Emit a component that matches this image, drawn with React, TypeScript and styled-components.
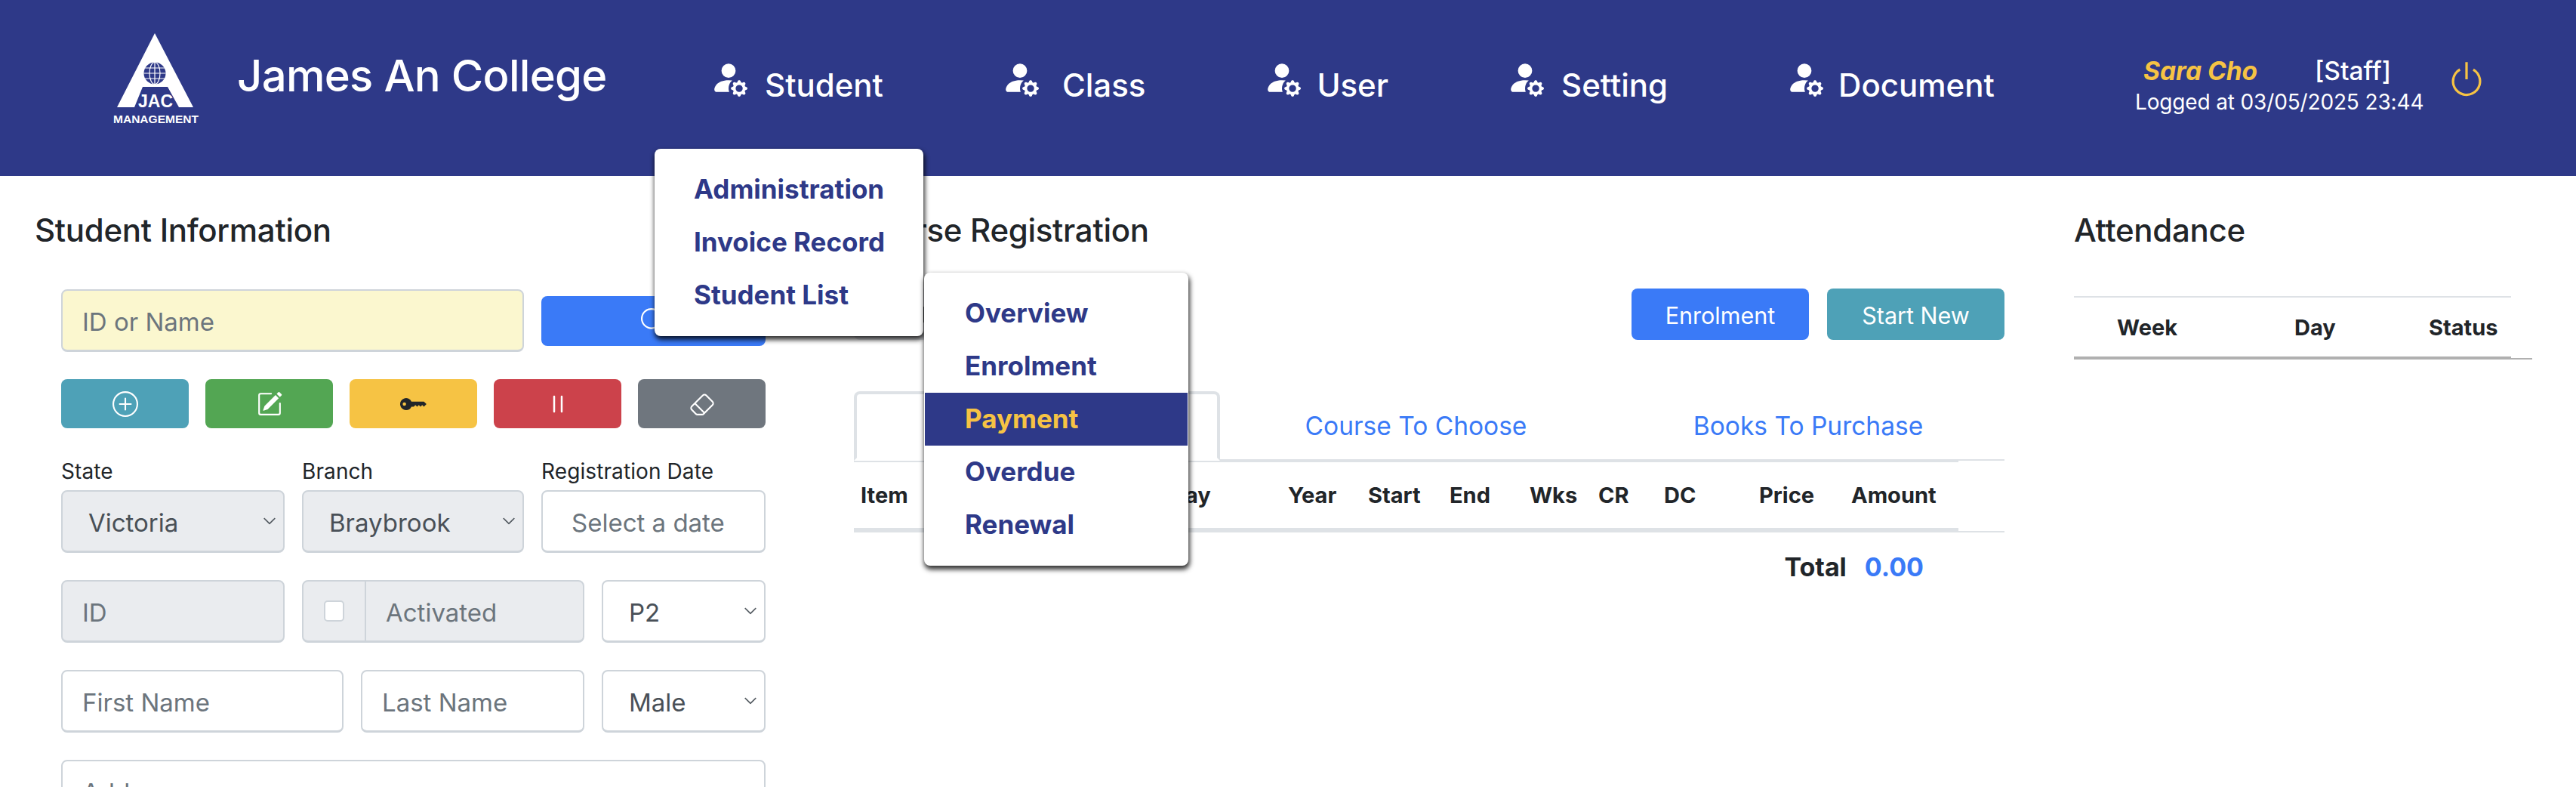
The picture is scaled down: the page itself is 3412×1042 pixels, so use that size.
import React from 'react';
import styled, { createGlobalStyle } from 'styled-components';
import { BsPersonFillGear, BsPower, BsSearch, BsPlusCircle, BsPencilSquare, BsKeyFill, BsPause, BsEraser, BsChevronDown } from 'react-icons/bs';

const NAVY = '#2e3988';
const YELLOW = '#f6c344';
const BLUE = '#3a7af7';
const TEAL = '#4ea1b7';
const LINE = '#dee2e6';
const FONT = 'Inter, "Liberation Sans", sans-serif';

const Global = createGlobalStyle`
  html, body { margin: 0; padding: 0; background: #fff; overflow: hidden; }
  * { box-sizing: border-box; }
  body { font-family: ${FONT}; color: #212529; }
`;

const Page = styled.div`
  position: relative;
  width: 3412px;
  height: 1042px;
  overflow: hidden;
`;

const Header = styled.header`
  height: 233px;
  background: ${NAVY};
  display: flex;
  align-items: flex-start;
  color: #fff;
`;

const Brand = styled.div`
  width: 940px;
  flex: none;
  display: flex;
  align-items: flex-start;
  padding: 44px 0 0 147px;
`;

const LogoSvg = styled.svg`
  width: 120px;
  height: 124px;
  flex: none;
  display: block;
`;

const BrandName = styled.div`
  margin: 20px 0 0 47px;
  font-size: 58px;
  letter-spacing: -0.7px;
  line-height: 72px;
  font-weight: 500;
  white-space: nowrap;
`;

const Nav = styled.nav`
  display: flex;
  gap: 156px;
  padding-top: 83px;
  width: 1888px;
  flex: none;
`;

const NavItem = styled.a<{ $gap: number }>`
  display: flex;
  align-items: flex-start;
  gap: ${p => p.$gap}px;
  font-size: 42px;
  line-height: 53px;
  font-weight: 500;
  color: #fff;
  white-space: nowrap;
  span { padding-top: 3px; }
  svg { width: 50px; height: 50px; flex: none; margin-top: -5px; }
`;

const UserBox = styled.div`
  display: flex;
  flex-direction: column;
  padding-top: 74px;
  width: 413px;
  flex: none;
`;

const UserTop = styled.div`
  display: flex;
  font-size: 33.5px;
  line-height: 40px;
  font-weight: 500;
  padding-left: 11px;
  white-space: nowrap;
`;

const UserName = styled.span`
  color: ${YELLOW};
  font-style: italic;
  font-weight: 700;
  width: 227px;
  flex: none;
`;

const LoggedAt = styled.div`
  font-size: 28px;
  letter-spacing: -0.15px;
  line-height: 42px;
  white-space: nowrap;
`;

const Power = styled(BsPower)`
  width: 52px;
  height: 52px;
  color: ${YELLOW};
  margin-top: 79px;
  flex: none;
`;

const Main = styled.main`
  display: flex;
  align-items: flex-start;
`;

const Heading = styled.h2`
  margin: 0;
  font-size: 42px;
  letter-spacing: -0.3px;
  line-height: 50px;
  font-weight: 500;
  white-space: nowrap;
`;

const LeftCol = styled.section`
  width: 1131px;
  flex: none;
  padding: 47px 0 0 46px;
`;

const Form = styled.div`
  width: 968px;
  padding: 53px 0 0 35px;
  display: flex;
  flex-direction: column;
  gap: 36px;
`;

const Row = styled.div<{ $cols: string }>`
  display: grid;
  grid-template-columns: ${p => p.$cols};
  column-gap: 23px;
  align-items: center;
`;

const fieldCss = `
  height: 83px;
  border: 2px solid #ced4da;
  border-bottom-width: 3px;
  border-radius: 8px;
  font-family: ${FONT};
  font-size: 33px;
  display: flex;
  align-items: center;
  min-width: 0;
  width: 100%;
  outline: none;
`;

const TextField = styled.input<{ $bg?: string; $pad?: number }>`
  ${fieldCss}
  padding: 3px ${p => p.$pad ?? 26}px 0;
  background: ${p => p.$bg || '#fff'};
  color: #495057;
  &::placeholder { color: #6c757d; opacity: 1; }
`;

const SelectBox = styled.div<{ $disabled?: boolean }>`
  ${fieldCss}
  position: relative;
  padding: 3px 34px 0;
  color: #495057;
  background: ${p => (p.$disabled ? '#eaecef' : '#fff')};
  svg {
    position: absolute;
    right: 9px;
    top: 30px;
    width: 18px;
    height: 18px;
    stroke-width: 0.6px;
  }
`;

const LabelledField = styled.div`
  display: flex;
  flex-direction: column;
  gap: 4px;
`;

const FieldLabel = styled.label`
  font-size: 28px;
  letter-spacing: 0.1px;
  line-height: 42px;
  color: #212529;
  white-space: nowrap;
`;

const ActionBar = styled.div`
  display: grid;
  grid-template-columns: repeat(5, 1fr);
  column-gap: 22px;
`;

const ActionButton = styled.button<{ $bg: string; $fg?: string; $icon?: number }>`
  height: 65px;
  border: none;
  border-radius: 8px;
  background: ${p => p.$bg};
  color: ${p => p.$fg || '#fff'};
  display: flex;
  align-items: center;
  justify-content: center;
  padding: 0;
  svg { width: ${p => p.$icon ?? 34}px; height: ${p => p.$icon ?? 34}px; }
`;

const SearchButton = styled(ActionButton)`
  height: 66px;
`;

const CheckGroup = styled.div`
  display: flex;
  height: 83px;
  border: 2px solid #ced4da;
  border-bottom-width: 3px;
  border-radius: 8px;
  background: #eaecef;
  overflow: hidden;
`;

const CheckCell = styled.div`
  width: 83px;
  flex: none;
  display: flex;
  align-items: center;
  justify-content: center;
  border-right: 2px solid #ced4da;
`;

const CheckBox = styled.input.attrs({ type: 'checkbox' })`
  appearance: none;
  width: 27px;
  height: 28px;
  margin: 0;
  background: #fff;
  border: 2px solid #ced4da;
  border-radius: 5px;
`;

const CheckLabel = styled.div`
  font-size: 33px;
  color: #6c757d;
  display: flex;
  align-items: center;
  padding: 3px 0 0 26px;
`;

const MidCol = styled.section`
  width: 1524px;
  flex: none;
  padding-top: 47px;
`;

const TopActions = styled.div`
  display: flex;
  align-items: flex-start;
  height: 188px;
  padding-top: 52px;
`;

const GhostButton = styled.div`
  position: relative;
  width: 170px;
  height: 68px;
  background: #e4e6ea;
  border-radius: 8px;
  &::after {
    content: '';
    position: absolute;
    left: 92px;
    top: 24px;
    width: 3px;
    height: 21px;
    background: #212529;
  }
`;

const ActionSpacer = styled.div`
  flex: 1;
`;

const TextButton = styled.button<{ $bg: string }>`
  width: 235px;
  height: 68px;
  margin-left: 24px;
  border: none;
  border-radius: 8px;
  background: ${p => p.$bg};
  color: #fff;
  font-family: ${FONT};
  font-size: 30.5px;
  padding: 2px 0 0;
`;

const Tabs = styled.div`
  display: flex;
  height: 92px;
  border-bottom: 2px solid ${LINE};
`;

const ActiveTab = styled.div`
  width: 485px;
  height: 92px;
  flex: none;
  background: #fff;
  border: 4px solid ${LINE};
  border-bottom-color: #fff;
  border-radius: 8px 8px 0 0;
`;

const TabLink = styled.a<{ $w: number }>`
  width: ${p => p.$w}px;
  flex: none;
  display: flex;
  align-items: center;
  justify-content: center;
  color: ${BLUE};
  font-size: 33.5px;
  padding-top: 2px;
  white-space: nowrap;
`;

const CourseTable = styled.div`
  border-bottom: 2px solid ${LINE};
`;

const CourseHead = styled.div`
  width: 1463px;
  height: 95px;
  margin-bottom: -2px;
  padding-left: 9px;
  display: grid;
  grid-template-columns: 409px 157px 106px 108px 106px 91px 87px 126px 122px 1fr;
  align-items: center;
  border-top: 2px solid ${LINE};
  border-bottom: 6px solid ${LINE};
  font-size: 29px;
  font-weight: 700;
  white-space: nowrap;
`;

const TotalRow = styled.div`
  width: 1463px;
  display: flex;
  justify-content: flex-end;
  gap: 24px;
  padding: 22px 46px 0 0;
  font-size: 34px;
  line-height: 48px;
  font-weight: 700;
`;

const TotalValue = styled.span`
  color: ${BLUE};
`;

const RightCol = styled.section`
  flex: 1;
  padding: 47px 0 0 92px;
`;

const AttendanceHead = styled.div`
  position: relative;
  width: 579px;
  height: 84px;
  margin-top: 62px;
  border-top: 2px solid ${LINE};
  border-bottom: 4px solid #b0b0b0;
  display: grid;
  grid-template-columns: 235px 178px 1fr;
  padding-left: 57px;
  align-items: center;
  font-size: 29px;
  font-weight: 700;
`;

const HeadOverrun = styled.i`
  position: absolute;
  left: 100%;
  bottom: -4px;
  width: 28px;
  height: 2px;
  background: #b0b0b0;
`;

const Menu = styled.div<{ $l: number; $t: number; $w: number }>`
  position: absolute;
  left: ${p => p.$l}px;
  top: ${p => p.$t}px;
  width: ${p => p.$w}px;
  padding: 19px 1px;
  background: #fff;
  border-radius: 8px;
  box-shadow: 1px 4px 6px 1px rgba(0, 0, 0, 0.8);
  z-index: 2;
`;

const MenuItem = styled.div<{ $pad: number; $active?: boolean }>`
  height: 70px;
  display: flex;
  align-items: center;
  padding: 0 0 2px ${p => p.$pad}px;
  font-size: 35px;
  font-weight: 700;
  white-space: nowrap;
  color: ${p => (p.$active ? YELLOW : NAVY)};
  background: ${p => (p.$active ? NAVY : 'transparent')};
`;

const Logo = () => (
  <LogoSvg viewBox="-3 0 120 124" aria-label="JAC Management logo">
    <path d="M55 0 L106 98 H87 L72 71 H39 L28 98 H5 Z" fill="#fff" />
    <circle cx="55" cy="53" r="14.5" fill={NAVY} />
    <g stroke="#fff" strokeWidth="1.2" fill="none">
      <ellipse cx="55" cy="53" rx="7" ry="14.5" />
      <path d="M55 38.5V67.5M42 46H68M40.5 53H69.5M42 60H68" />
    </g>
    <text x="56" y="98" textAnchor="middle" fill="#fff" fontFamily="'Liberation Sans',sans-serif" fontWeight="700" fontSize="23" textLength="46" lengthAdjust="spacingAndGlyphs">JAC</text>
    <text x="56.5" y="119" textAnchor="middle" fill="#fff" fontFamily="'Liberation Sans',sans-serif" fontWeight="700" fontSize="15" textLength="113" lengthAdjust="spacingAndGlyphs">MANAGEMENT</text>
  </LogoSvg>
);

const navItems: [string, number][] = [['Student', 23], ['Class', 31], ['User', 21], ['Setting', 23], ['Document', 20]];

export default function App() {
  return (
    <Page>
      <Global />
      <Header>
        <Brand>
          <Logo />
          <BrandName>James An College</BrandName>
        </Brand>
        <Nav>
          {navItems.map(([t, g]) => (
            <NavItem key={t} $gap={g}><BsPersonFillGear /><span>{t}</span></NavItem>
          ))}
        </Nav>
        <UserBox>
          <UserTop><UserName>Sara Cho</UserName><span>[Staff]</span></UserTop>
          <LoggedAt>Logged at 03/05/2025 23:44</LoggedAt>
        </UserBox>
        <Power />
      </Header>
      <Main>
        <LeftCol>
          <Heading>Student Information</Heading>
          <Form>
            <Row $cols="613px 297px">
              <TextField placeholder="ID or Name" $bg="#fbf7cf" />
              <SearchButton $bg={BLUE}><BsSearch /></SearchButton>
            </Row>
            <ActionBar>
              <ActionButton $bg={TEAL}><BsPlusCircle /></ActionButton>
              <ActionButton $bg="#53a653"><BsPencilSquare /></ActionButton>
              <ActionButton $bg={YELLOW} $fg="#212529" $icon={36}><BsKeyFill /></ActionButton>
              <ActionButton $bg="#cc424b" $icon={40}><BsPause /></ActionButton>
              <ActionButton $bg="#6f767e"><BsEraser /></ActionButton>
            </ActionBar>
            <Row $cols="296px 294px 297px">
              <LabelledField><FieldLabel>State</FieldLabel><SelectBox $disabled>Victoria<BsChevronDown /></SelectBox></LabelledField>
              <LabelledField><FieldLabel>Branch</FieldLabel><SelectBox $disabled>Braybrook<BsChevronDown /></SelectBox></LabelledField>
              <LabelledField><FieldLabel>Registration Date</FieldLabel><TextField placeholder="Select a date" $pad={38} /></LabelledField>
            </Row>
            <Row $cols="296px 374px 217px">
              <TextField placeholder="ID" $bg="#eaecef" />
              <CheckGroup><CheckCell><CheckBox /></CheckCell><CheckLabel>Activated</CheckLabel></CheckGroup>
              <SelectBox>P2<BsChevronDown /></SelectBox>
            </Row>
            <Row $cols="374px 296px 217px">
              <TextField placeholder="First Name" />
              <TextField placeholder="Last Name" />
              <SelectBox>Male<BsChevronDown /></SelectBox>
            </Row>
            <Row $cols="1fr">
              <TextField placeholder="Address" />
            </Row>
          </Form>
        </LeftCol>
        <MidCol>
          <Heading>Course Registration</Heading>
          <TopActions>
            <GhostButton />
            <ActionSpacer />
            <TextButton $bg={BLUE}>Enrolment</TextButton>
            <TextButton $bg={TEAL}>Start New</TextButton>
          </TopActions>
          <Tabs>
            <ActiveTab />
            <TabLink $w={519}>Course To Choose</TabLink>
            <TabLink $w={520}>Books To Purchase</TabLink>
          </Tabs>
          <CourseTable>
            <CourseHead>
              <span>Item</span><span>Day</span><span>Year</span><span>Start</span><span>End</span>
              <span>Wks</span><span>CR</span><span>DC</span><span>Price</span><span>Amount</span>
            </CourseHead>
          </CourseTable>
          <TotalRow><span>Total</span><TotalValue>0.00</TotalValue></TotalRow>
        </MidCol>
        <RightCol>
          <Heading>Attendance</Heading>
          <AttendanceHead>
            <span>Week</span><span>Day</span><span>Status</span>
            <HeadOverrun />
          </AttendanceHead>
        </RightCol>
      </Main>
      <Menu $l={867} $t={197} $w={356}>
        <MenuItem $pad={51}>Administration</MenuItem>
        <MenuItem $pad={51}>Invoice Record</MenuItem>
        <MenuItem $pad={51}>Student List</MenuItem>
      </Menu>
      <Menu $l={1224} $t={361} $w={350}>
        <MenuItem $pad={53}>Overview</MenuItem>
        <MenuItem $pad={53}>Enrolment</MenuItem>
        <MenuItem $pad={53} $active>Payment</MenuItem>
        <MenuItem $pad={53}>Overdue</MenuItem>
        <MenuItem $pad={53}>Renewal</MenuItem>
      </Menu>
    </Page>
  );
}
